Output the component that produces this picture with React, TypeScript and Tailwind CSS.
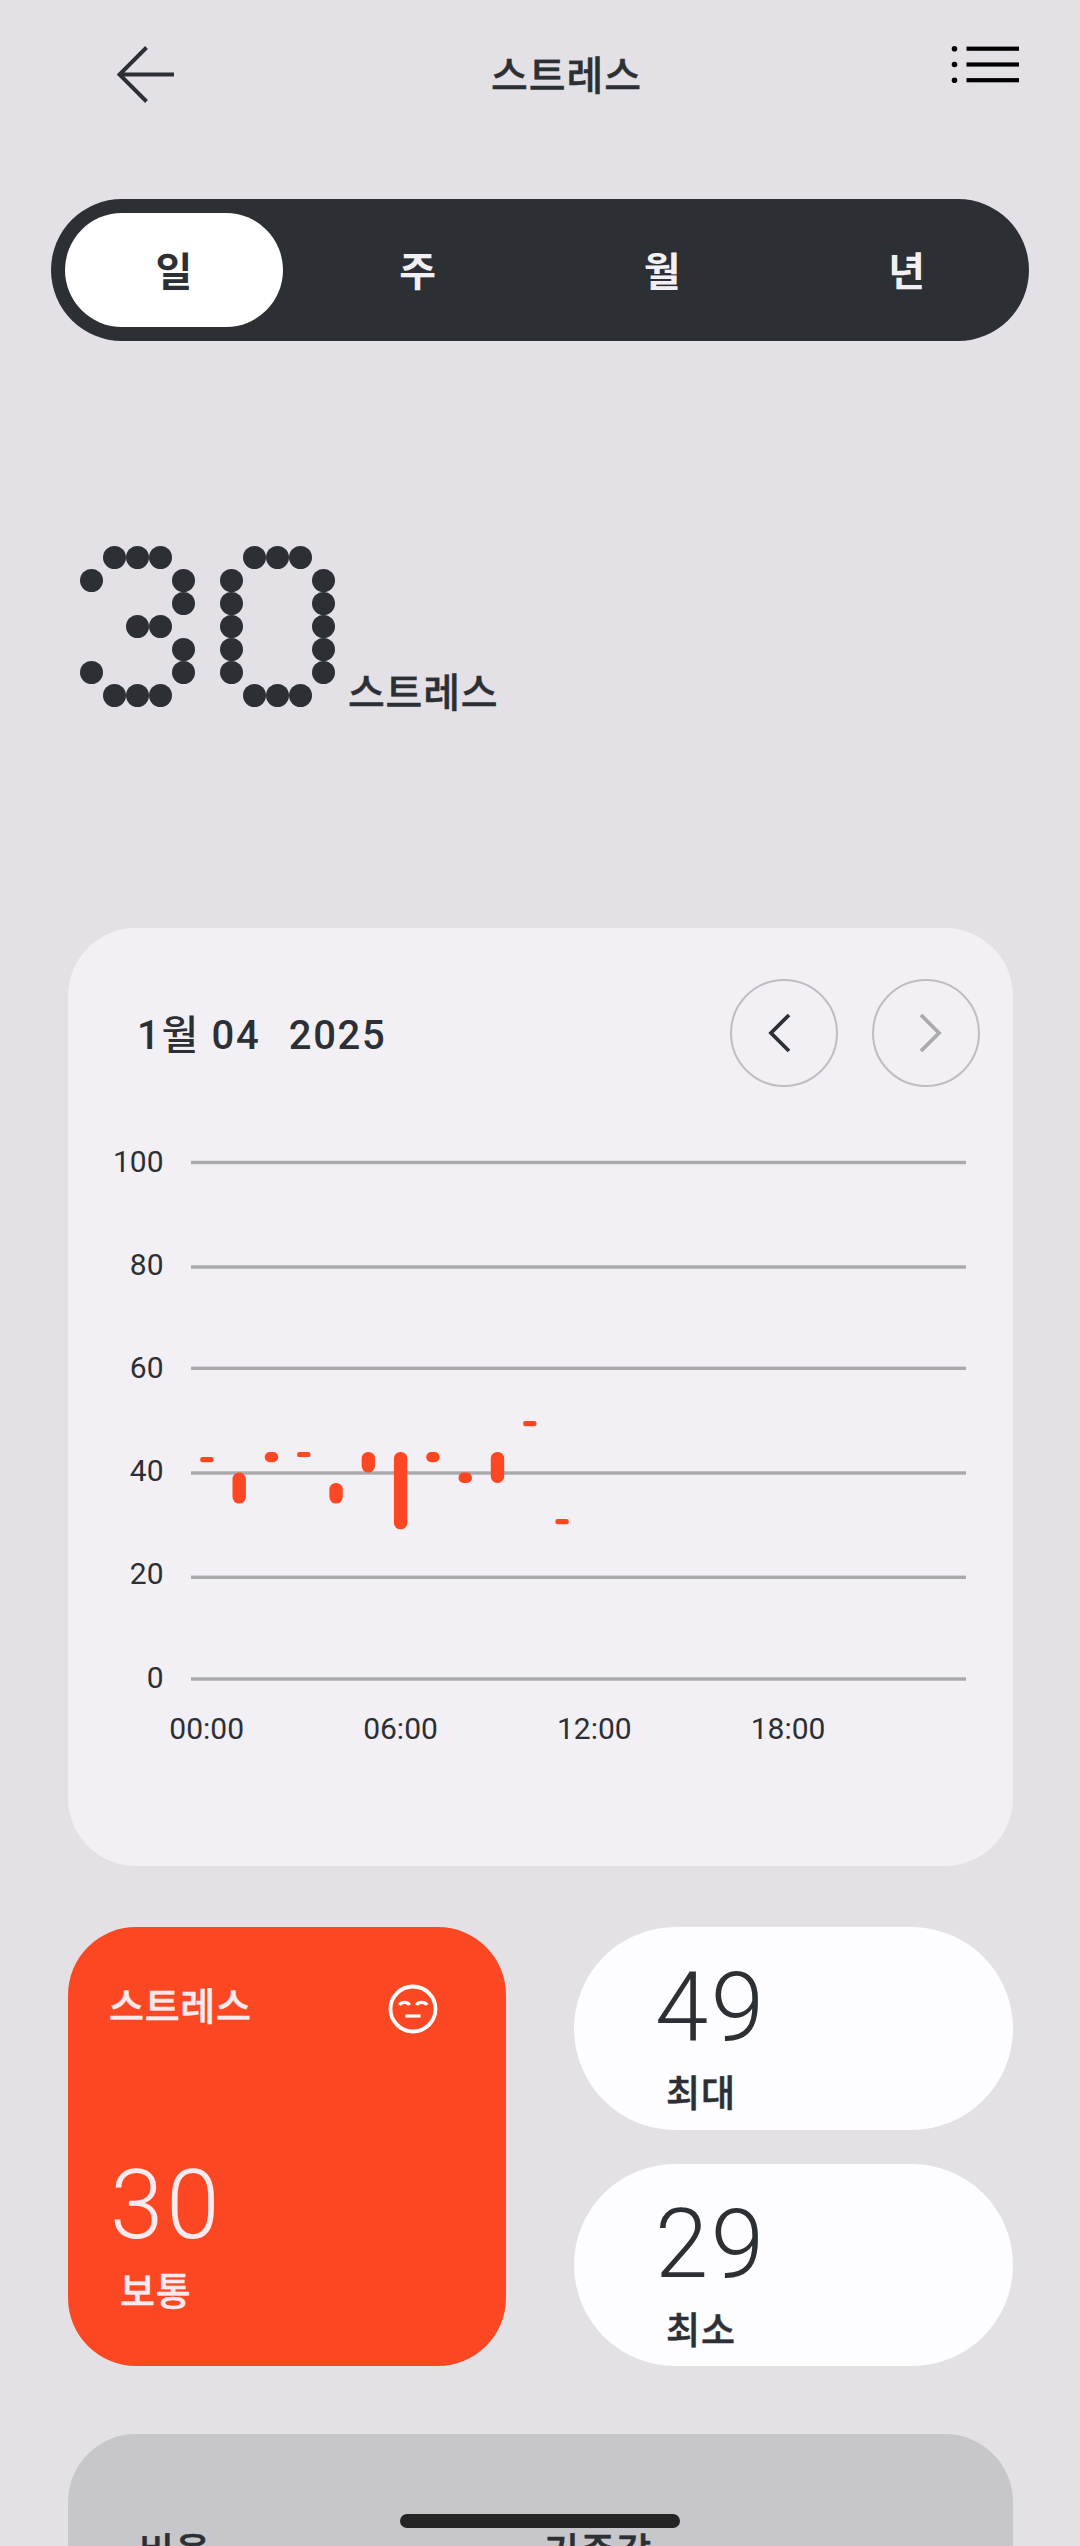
import React from 'react';

const tabs = ['일', '주', '월', '년'];

const digits = [
  ['01110', '10001', '00001', '00110', '00001', '10001', '01110'],
  ['01110', '10001', '10001', '10001', '10001', '10001', '01110'],
];

const gridLines = [
  { value: 100, y: 1162.5, text: 1172 },
  { value: 80, y: 1267, text: 1275 },
  { value: 60, y: 1368.3, text: 1378 },
  { value: 40, y: 1473, text: 1481 },
  { value: 20, y: 1577.3, text: 1584 },
  { value: 0, y: 1679, text: 1688 },
];

const hours = ['00:00', '06:00', '12:00', '18:00'];

// min / max per hour
const ranges = [
  [42, 43], [34, 40], [42, 44], [43, 44], [34, 38], [40, 44],
  [29, 44], [42, 44], [38, 40], [38, 44], [49, 50], [30, 31],
];

function DotDigit({ rows }: { rows: string[] }) {
  return (
    <div className="grid grid-cols-5">
      {rows.join('').split('').map((cell, i) => (
        <span key={i} className="size-[23px]">
          {cell === '1' && <span className="block size-[23px] rounded-full bg-[#2c2f33]" />}
        </span>
      ))}
    </div>
  );
}

function Chart() {
  return (
    <svg viewBox="68 1130 945 640" className="block h-[640px] w-[945px]">
      {gridLines.map((line) => (
        <g key={line.value}>
          <rect x="191" y={line.y - 1.7} width="775" height="3.4" fill="#aaa9ae" />
          <text x="163.500" y={line.text} textAnchor="end" fontSize="30" fill="#2c2f33">{line.value}</text>
        </g>
      ))}
      {ranges.map(([min, max], i) => (
        <rect
          key={i}
          x={200.2 + i * 32.29}
          y={1679 - max * 5.16}
          width="13.4"
          height={(max - min) * 5.16}
          rx={max - min === 1 ? 2.2 : max - min === 2 ? 5 : 6.5}
          fill="#fb4822"
        />
      ))}
      {hours.map((hour, i) => (
        <text key={hour} x={206.7 + i * 193.8} y="1739" textAnchor="middle" fontSize="30" fill="#2c2f33">{hour}</text>
      ))}
    </svg>
  );
}

function StatPill({ value, label }: { value: number; label: string }) {
  return (
    <div className="h-[202.5px] rounded-full bg-[#fdfcff] pl-[81px] pt-[32px]">
      <div className="text-[96px] font-light leading-[96px] tracking-[2.5px]">{value}</div>
      <div className="mt-[13px] pl-[11px] text-[37px] font-medium leading-[54px] tracking-[1px] [-webkit-text-stroke:0.5px]">{label}</div>
    </div>
  );
}

export default function App() {
  return (
    <div className="relative h-[2546px] w-[1080px] overflow-hidden bg-[#e3e1e6] font-[Roboto,'Noto_Sans_CJK_KR',sans-serif] text-[#2c2f33]">
      <header className="flex h-[199px] items-start justify-between pl-[116px] pr-[60px]">
        <svg viewBox="0 0 58 60" className="mt-[44px] h-[60px] w-[58px]" fill="none" stroke="#2c2f33" strokeWidth="3.9">
          <path d="M30.500 3.500 L3.500 30.500 L30.500 57.500 M3.500 30.500 H58" />
        </svg>
        <h1 className="mt-[48px] pl-[9px] text-[40px] font-medium leading-[58px] tracking-[1px] [-webkit-text-stroke:0.4px]">스트레스</h1>
        <svg viewBox="0 0 70 40" className="mt-[45px] h-[40px] w-[70px]" fill="#000">
          {[3.7, 19.5, 35.2].map((y) => (
            <g key={y}>
              <circle cx="4.5" cy={y} r="2.8" />
              <rect x="16.5" y={y - 2.1} width="52.500" height="4.2" />
            </g>
          ))}
        </svg>
      </header>

      <nav className="mx-[51px] grid h-[142px] grid-cols-4 rounded-full bg-[#2c2f33] text-[40px] font-bold text-[#f2f0f5]">
        {tabs.map((tab, i) => (
          <button
            key={tab}
            className={`pt-[5px] ${i === 0 ? 'my-[14px] ml-[14px] mr-[12.5px] rounded-full bg-white text-[#2c2f33]' : ''}`}
          >
            {tab}
          </button>
        ))}
      </nav>

      <section className="flex h-[587px] items-start pl-[80px] pt-[205px]">
        <div className="flex gap-[25px]" role="img" aria-label="30">
          {digits.map((rows, i) => <DotDigit key={i} rows={rows} />)}
        </div>
        <span className="ml-[13px] mt-[119px] text-[40px] font-medium leading-[58px] tracking-[0.8px] [-webkit-text-stroke:0.4px]">스트레스</span>
      </section>

      <main className="mx-[68px] w-[945px]">
        <section className="h-[938px] rounded-[68px] bg-[#f2f0f5] pt-[51px]">
          <div className="flex h-[108px] items-center pl-[69px] pr-[33px]">
            <h2 className="mr-auto whitespace-pre pt-[5px] text-[40px] font-medium tracking-[1.7px]">
              1월 04  <span className="ml-[5px]">2025</span>
            </h2>
            <button className="flex size-[108px] items-center justify-center rounded-full border-2 border-[#bebdc2]">
              <svg viewBox="0 0 24 40" className="mr-[10px] h-[40px] w-[24px]" fill="none" stroke="#2c2f33" strokeWidth="3.8">
                <path d="M22 2 L4 20 L22 38" />
              </svg>
            </button>
            <button className="ml-[34px] flex size-[108px] items-center justify-center rounded-full border-2 border-[#bebdc2]">
              <svg viewBox="0 0 24 40" className="ml-[10px] h-[40px] w-[24px]" fill="none" stroke="#aaa9ae" strokeWidth="3.8">
                <path d="M2 2 L20 20 L2 38" />
              </svg>
            </button>
          </div>
          <div className="mt-[43px]">
            <Chart />
          </div>
        </section>

        <section className="mt-[61px] grid h-[439px] grid-cols-[438px_439px] gap-x-[68px]">
          <div className="flex flex-col justify-between rounded-[68px] bg-[#fb4822] pb-[47px] pl-[41px] pr-[68px] pt-[54px] text-[#f9eaf0]">
            <div className="flex items-center justify-between">
              <span className="-mt-[1px] text-[38px] font-medium leading-[54px] tracking-[0.7px] [-webkit-text-stroke:0.5px]">스트레스</span>
              <svg viewBox="0 0 50 50" className="mt-[2px] size-[50px]" fill="none" stroke="#fff" strokeWidth="3.8">
                <circle cx="25" cy="25" r="22.500" />
                <path d="M11.500 21 C13 17.500 20 17.500 21.500 21 M28.500 21 C30 17.500 37.500 17.500 39 21" strokeWidth="3.2" />
                <path d="M17.500 32 H32.500" strokeWidth="3.2" />
              </svg>
            </div>
            <div>
              <div className="pl-[1px] text-[96px] font-light leading-[96px] tracking-[3px]">30</div>
              <div className="mt-[12px] pl-[11px] text-[38px] font-medium leading-[54px] tracking-[0.7px] [-webkit-text-stroke:0.5px]">보통</div>
            </div>
          </div>
          <div className="flex flex-col justify-between">
            <StatPill value={49} label="최대" />
            <StatPill value={29} label="최소" />
          </div>
        </section>

        <section className="mt-[68px] flex h-[300px] rounded-[68px] bg-[#c7c6cb] pl-[71px] pt-[91px] text-[38px] font-medium leading-[54px] tracking-[1.2px] [-webkit-text-stroke:0.5px]">
          <span className="w-[405px]">비율</span>
          <span>기준값</span>
        </section>
      </main>

      {/* home indicator */}
      <div className="absolute left-[400px] top-[2514px] h-[14px] w-[280px] rounded-full bg-[#242424]" />
    </div>
  );
}
